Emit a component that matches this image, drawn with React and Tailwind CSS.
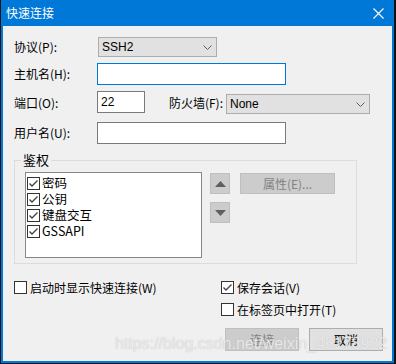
const ui = { fontFamily: '"Noto Sans CJK SC", "Liberation Sans", sans-serif' };

function Chevron() {
  return (
    <svg width="9" height="5" viewBox="0 0 9 5" className="ml-auto mr-[4px]">
      <polyline points="0.5,0.5 4.5,4.5 8.5,0.5" fill="none" stroke="#606060" strokeWidth="1" />
    </svg>
  );
}

function Select({ value, w }) {
  return (
    <div className={`flex items-center h-[20px] ${w} bg-[#e1e1e1] border border-[#adadad] pl-[3px] text-[12px] text-black`}>
      <span className="font-['Liberation_Sans'] leading-none">{value}</span>
      <Chevron />
    </div>
  );
}

function Check({ checked }) {
  return (
    <div className="w-[13px] h-[13px] shrink-0 bg-white border border-[#333333] flex items-center justify-center">
      {checked && (
        <svg width="11" height="11" viewBox="0 0 11 11">
          <polyline points="1.5,5.5 4,8 9.5,2.5" fill="none" stroke="#444444" strokeWidth="1.4" />
        </svg>
      )}
    </div>
  );
}

function ListItem({ label, checked = true }) {
  return (
    <div className="flex items-center h-[16px] gap-[2px]">
      <Check checked={checked} />
      <span className="text-[12.5px] leading-[16px] text-black">{label}</span>
    </div>
  );
}

function Label({ children, w }) {
  return <div className={`${w} text-[12px] text-black leading-none`}>{children}</div>;
}

export default function App() {
  return (
    <div className="w-[396px] h-[364px] bg-[#111111] pl-px pr-[2px] pb-px" style={ui}>
      <div className="w-full h-full bg-[#0078d7] flex flex-col px-[2px] pb-[2px]">
        {/* title bar */}
        <div className="h-[26px] flex items-center shrink-0">
          <span className="text-white text-[12px] ml-[3px] leading-none">快速连接</span>
          <svg width="11" height="11" viewBox="0 0 11 11" className="ml-auto mr-[8px]">
            <path d="M0.5 0.5 L10.5 10.5 M10.5 0.5 L0.5 10.5" stroke="white" strokeWidth="1.1" />
          </svg>
        </div>

        <div className="relative flex-1 bg-[#f0f0f0] flex flex-col pl-[11px] overflow-hidden">
          {/* row: protocol */}
          <div className="mt-[11px] flex items-center h-[20px]">
            <Label w="w-[84px]">协议(P):</Label>
            <Select value="SSH2" w="w-[119px]" />
          </div>
          {/* row: host */}
          <div className="mt-[6px] flex items-center h-[22px]">
            <Label w="w-[83px]">主机名(H):</Label>
            <div className="w-[189px] h-[22px] bg-white border border-[#0078d7]" />
          </div>
          {/* row: port + firewall */}
          <div className="mt-[6px] flex items-start h-[22px]">
            <Label w="w-[83px] mt-[6px]">端口(O):</Label>
            <div className="w-[48px] h-[22px] bg-white border border-[#7a7a7a] flex items-center pl-[3px]">
              <span className="text-[12px] leading-none font-['Liberation_Sans']">22</span>
            </div>
            <div className="w-[81px] mt-[6px] text-right pr-[3px] text-[12px] leading-none">防火墙(F):</div>
            <div className="mt-[3px]">
              <Select value="None" w="w-[144px]" />
            </div>
          </div>
          {/* row: user */}
          <div className="mt-[9px] flex items-center h-[22px]">
            <Label w="w-[83px]">用户名(U):</Label>
            <div className="w-[189px] h-[22px] bg-white border border-[#7a7a7a]" />
          </div>

          {/* group box */}
          <div className="relative mt-[16px] w-[343px] h-[104px] border border-[#dcdcdc] pt-[11px] pl-[10px] flex gap-[8px]">
            <span className="absolute -top-[8px] left-[6px] px-[2px] bg-[#f0f0f0] text-[13px] leading-none">鉴权</span>
            <div className="w-[177px] h-[86px] bg-white border border-[#828790] pl-px pt-[2px] flex flex-col">
              <ListItem label="密码" />
              <ListItem label="公钥" />
              <ListItem label="键盘交互" />
              <ListItem label="GSSAPI" />
            </div>
            <div className="flex flex-col gap-[8px] pt-px">
              <div className="w-[20px] h-[21px] bg-[#cccccc] border border-[#bfbfbf] flex items-center justify-center">
                <svg width="11" height="6" viewBox="0 0 11 6">
                  <polygon points="5.5,0 11,6 0,6" fill="#606060" />
                </svg>
              </div>
              <div className="w-[20px] h-[21px] bg-[#cccccc] border border-[#bfbfbf] flex items-center justify-center">
                <svg width="11" height="6" viewBox="0 0 11 6">
                  <polygon points="0,0 11,0 5.5,6" fill="#606060" />
                </svg>
              </div>
            </div>
            <div className="ml-[2px] pt-px">
              <div className="w-[95px] h-[21px] bg-[#cccccc] border border-[#bfbfbf] flex items-center justify-center text-[12px] text-[#838383] leading-none">
                属性(E)...
              </div>
            </div>
          </div>

          {/* bottom options */}
          <div className="mt-[17px] flex">
            <div className="w-[207px] flex items-center gap-[3px] h-[13px]">
              <Check />
              <span className="text-[12px] leading-none">启动时显示快速连接(W)</span>
            </div>
            <div className="flex flex-col gap-[9px]">
              <div className="flex items-center gap-[3px] h-[13px]">
                <Check checked />
                <span className="text-[12px] leading-none">保存会话(V)</span>
              </div>
              <div className="flex items-center gap-[3px] h-[13px]">
                <Check />
                <span className="text-[12px] leading-none">在标签页中打开(T)</span>
              </div>
            </div>
          </div>

          {/* buttons */}
          <div className="mt-[12px] flex justify-end gap-[10px] pr-[9px]">
            <div className="w-[74px] h-[23px] bg-[#cccccc] border border-[#bfbfbf] flex items-center justify-center text-[12px] text-[#838383] leading-none">
              连接
            </div>
            <div className="w-[74px] h-[23px] bg-[#e1e1e1] border border-[#adadad] flex items-center justify-center text-[12px] text-black leading-none">
              取消
            </div>
          </div>

          {/* watermark */}
          <div className="absolute left-[112px] top-[310px] text-[16px] leading-none font-['Liberation_Sans'] text-white/70 [text-shadow:0_0_1px_#b0b0b0] pointer-events-none whitespace-nowrap">
            https://blog.csdn.net/weixin_45178922
          </div>
        </div>
      </div>
    </div>
  );
}
